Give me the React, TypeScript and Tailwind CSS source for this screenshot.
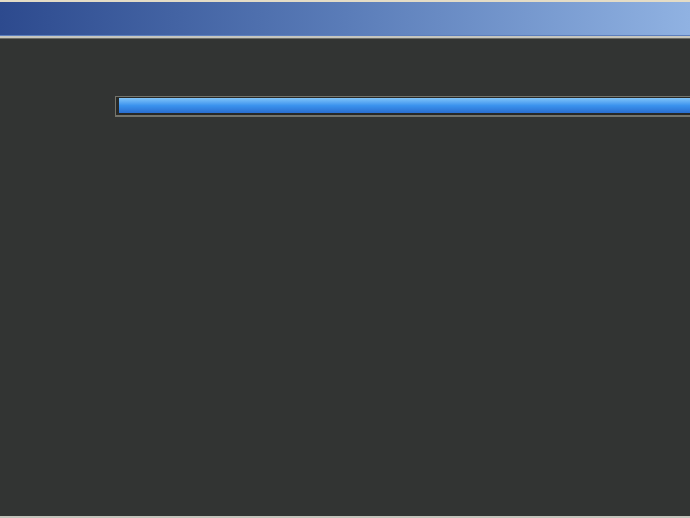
export default function App() {
  return (
    <div className="flex h-[518px] w-full flex-col overflow-hidden bg-[#323433]">
      <div className="h-[2px] bg-[#e4dcc6]" />
      <div className="h-[33px] bg-gradient-to-r from-[#2d4a8e] via-[#5a7cb8] to-[#90b2e2]" />
      <div className="h-[1px] bg-[#5d7fbd]" />
      <div className="h-[2px] bg-[#c6c6be]" />
      <div className="h-[1px] bg-[#6c6c66]" />
      <div className="flex-1 pl-[115px] pt-[57px]">
        <div className="h-[21px] w-[600px] border border-b-2 border-[#74746c] bg-[#282927] pb-[2px] pl-[3px] pt-[1px]">
          <div className="h-full w-full bg-gradient-to-b from-[#80c4f8] via-[#3b93ee] to-[#2a6ed0]" />
        </div>
      </div>
      <div className="h-[2px] bg-[#c4c4bc]" />
    </div>
  );
}
